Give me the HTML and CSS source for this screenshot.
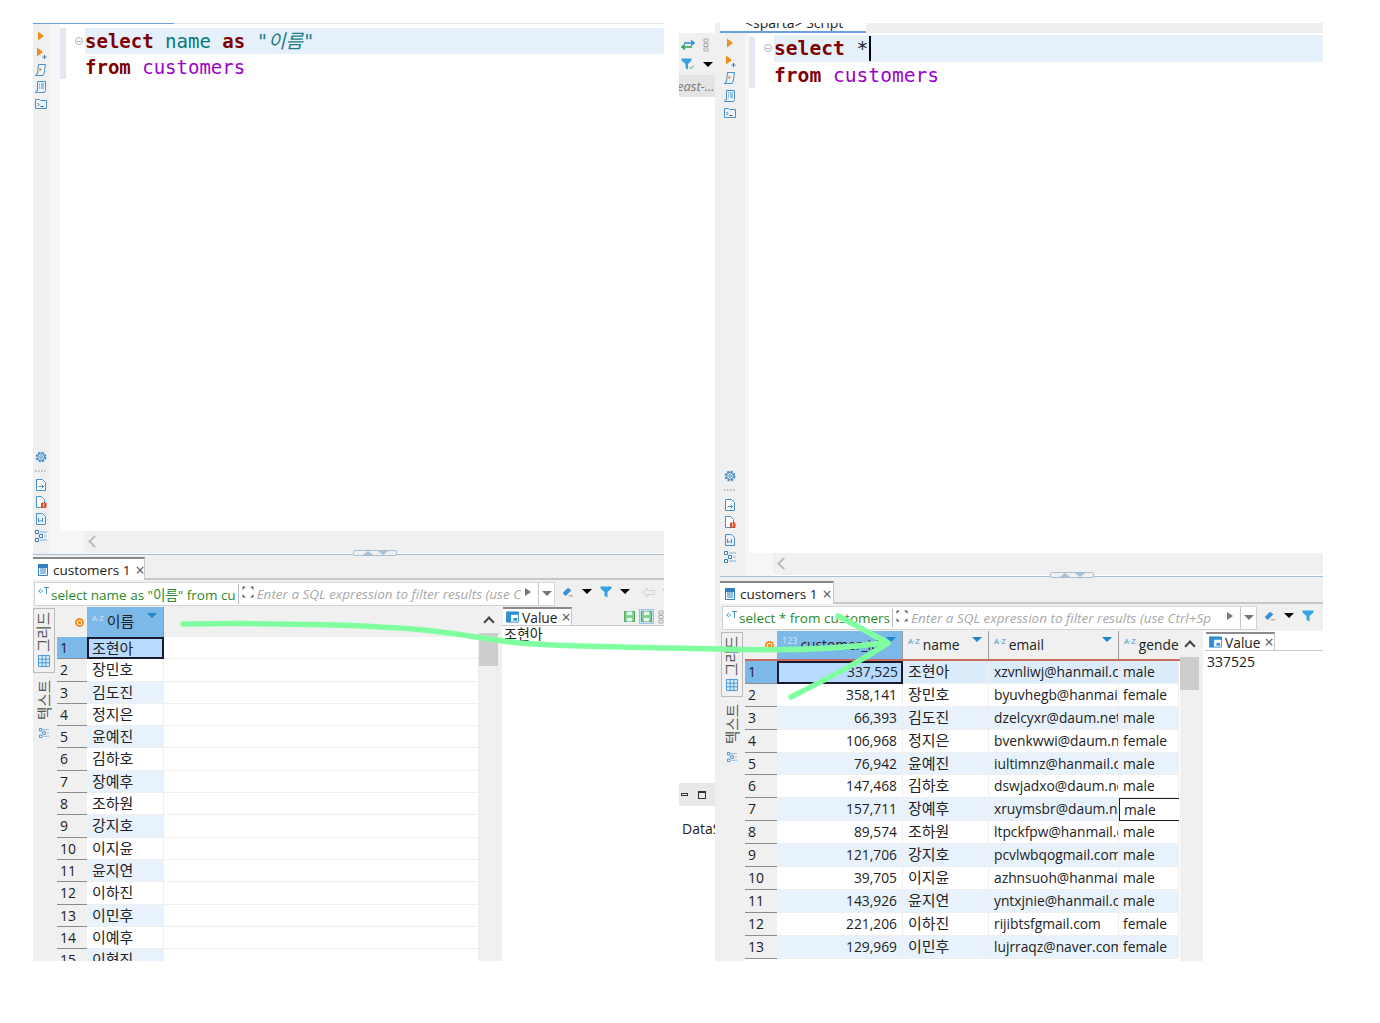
FILE: index.html
```html
<!DOCTYPE html>
<html lang="ko">
<head>
    <meta charset="UTF-8">
    <title>customers</title>
    <link rel="stylesheet" href="styles.css">
</head>
<body>
    <!-- 아이콘 모음 -->
    <svg class="icon-defs" xmlns="http://www.w3.org/2000/svg">
        <symbol id="i-run" viewBox="0 0 12 12"><path d="M3 1.500 9 6 3 10.500z" fill="#f08c1e"/></symbol>
        <symbol id="i-run-plus" viewBox="0 0 12 12"><path d="M2 .5 8 5 2 9.500z" fill="#f08c1e"/><path d="M9.500 8v4M7.500 10h4" stroke="#3a78b0" fill="none"/></symbol>
        <symbol id="i-script" viewBox="0 0 12 12"><path d="M3.500 .5h7L9 10h-.5L8 11.500H.5L1.500 10H2.500z" fill="#eaf3fb" stroke="#4a90c8"/><path d="M4.500 3.500l2.500 2-2.500 2z" fill="#f08c1e"/></symbol>
        <symbol id="i-list" viewBox="0 0 12 12"><path d="M2.500 .5h8v9l-1 2H.5l1-2h1z" fill="#eaf3fb" stroke="#4a90c8"/><path d="M4 3h1M6 3h3M4 5h1M6 5h3M4 7h1M6 7h3" stroke="#4a90c8"/></symbol>
        <symbol id="i-console" viewBox="0 0 12 12"><path d="M.5 10.500V1.500h4l1 1h6v8z" fill="#eaf3fb" stroke="#4a90c8"/><path d="M2.500 5l1.500 1.500L2.500 8M5.500 8.500h3" stroke="#35658f" fill="none"/></symbol>
        <symbol id="i-gear" viewBox="0 0 12 12"><circle cx="6" cy="6" r="4.200" fill="none" stroke="#4a90c8" stroke-width="2.400" stroke-dasharray="2.200 1.100"/><circle cx="6" cy="6" r="3.300" fill="#eaf3fb" stroke="#4a90c8"/><circle cx="6" cy="6" r="1.300" fill="none" stroke="#4a90c8"/></symbol>
        <symbol id="i-dots" viewBox="0 0 12 4"><path d="M0 2h12" stroke="#aaa" stroke-width="1.500" stroke-dasharray="1.500 1.500"/></symbol>
        <symbol id="i-doc-go" viewBox="0 0 12 12"><path d="M1.500 .5h6l3 3v8h-9z" fill="#fff" stroke="#4a90c8"/><path d="M3.500 7.500h5M6.500 5.500l2 2-2 2" stroke="#4a90c8" fill="none"/></symbol>
        <symbol id="i-doc-err" viewBox="0 0 12 12"><path d="M1.500 .5h5l3 3v8h-8z" fill="#fff" stroke="#4a90c8"/><rect x="6" y="6.500" width="5.500" height="5.500" rx="1" fill="#d9492e"/><path d="M8.700 7.500v2.200M8.700 10.300v.8" stroke="#fff"/></symbol>
        <symbol id="i-doc-x" viewBox="0 0 12 12"><path d="M1.500 .5h6l3 3v8h-9z" fill="#eaf3fb" stroke="#4a90c8"/><path d="M3.500 5v4l2-2 2 2V5" stroke="#4a90c8" fill="none"/></symbol>
        <symbol id="i-outline" viewBox="0 0 12 12"><path d="M.5 .5h3v3h-3zM4.500 4.500h3v3h-3zM.5 8.500h3v3h-3z" fill="#fff" stroke="#2f7fc1"/><path d="M5 2h7M9 6h3M5 10h7" stroke="#a9c6e0" stroke-width="1.500"/></symbol>
        <symbol id="i-table" viewBox="0 0 12 12"><path d="M.5 .5h11v11H.5z" fill="#d8ebfa" stroke="#4a9bd8"/><path d="M4.200 .5v11M7.800 .5v11M.5 4.200h11M.5 7.800h11" stroke="#4a9bd8"/></symbol>
        <symbol id="i-sheet" viewBox="0 0 12 12"><path d="M1.500 .5h9v11h-9z" fill="#fff" stroke="#2f7fc1"/><path d="M1.500 1h9v2.500h-9zM3 5h6M3 7h6M3 9h6" fill="#2f7fc1" stroke="#2f7fc1"/></symbol>
        <symbol id="i-sql" viewBox="0 0 12 10"><path d="M4 3 1.500 5 4 7" fill="none" stroke="#4a90c8"/><circle cx="5.200" cy="5" r=".8" fill="#4a90c8"/><path d="M7 1.500h5M9.500 1.500V8" stroke="#4a90c8" fill="none"/></symbol>
        <symbol id="i-expand" viewBox="0 0 12 12"><path d="M.5 .5h3.500l-3.500 3.500zM11.500 .5H8l3.500 3.500zM.5 11.500H4L.5 8zM11.500 11.500H8L11.500 8z" fill="#666"/></symbol>
        <symbol id="i-eraser" viewBox="0 0 14 12"><path d="M1 7 7 1l4 3-6 6H3z" fill="#3e8fd0"/><path d="M8 10.500h5" stroke="#888"/></symbol>
        <symbol id="i-funnel" viewBox="0 0 12 12"><path d="M.5 .5h11v2L7.500 6v5.500l-3-1.500V6L.5 2.500z" fill="#35a3e0"/></symbol>
        <symbol id="i-funnel-ok" viewBox="0 0 14 12"><path d="M.5 .5h10v2L7 6v5.500l-2.500-1.500V6L.5 2.500z" fill="#35a3e0"/><path d="M8.500 9l1.500 1.500 3-3" stroke="#3cb46e" fill="none"/></symbol>
        <symbol id="i-save" viewBox="0 0 12 12"><path d="M.5 .5h11v11H.5z" fill="#7dd08a" stroke="#45a05a"/><path d="M3 .5h6v4H3z" fill="#e6f6ea"/><path d="M3 7.500h6v4H3z" fill="#e6f6ea"/></symbol>
        <symbol id="i-value" viewBox="0 0 14 12"><path d="M.5 .5h13v11H.5z" fill="#fff" stroke="#2f8fd0"/><path d="M.5 .5h13v3H.5zM.5 .5h5v11h-5z" fill="#2f8fd0"/><path d="M8 7h4v3H8z" fill="#2f8fd0"/></symbol>
        <symbol id="i-swap" viewBox="0 0 14 10"><path d="M3 3h9M10 .5 13 3l-3 2.500" stroke="#2f8fd0" fill="none" stroke-width="1.500"/><path d="M11 7H2M4 4.500 1 7l3 2.500" stroke="#2da05a" fill="none" stroke-width="1.500"/></symbol>
        <symbol id="i-grip" viewBox="0 0 6 14"><path d="M1 1h4v3H1zM1 5.500h4v3H1zM1 10h4v3H1z" fill="none" stroke="#aaa"/></symbol>
    </svg>

    <!-- 왼쪽 캡처 -->
    <section class="win win-left">
        <div class="tabstrip"><div class="tabstrip-active tabstrip-active-left"></div></div>
        <div class="editor">
            <div class="tools">
                <div class="tools-group">
                    <svg class="ic"><use href="#i-run"/></svg>
                    <svg class="ic"><use href="#i-run-plus"/></svg>
                    <svg class="ic"><use href="#i-script"/></svg>
                    <svg class="ic"><use href="#i-list"/></svg>
                    <svg class="ic"><use href="#i-console"/></svg>
                </div>
                <div class="tools-group">
                    <svg class="ic"><use href="#i-gear"/></svg>
                    <svg class="ic ic-dots"><use href="#i-dots"/></svg>
                    <svg class="ic"><use href="#i-doc-go"/></svg>
                    <svg class="ic"><use href="#i-doc-err"/></svg>
                    <svg class="ic"><use href="#i-doc-x"/></svg>
                    <svg class="ic"><use href="#i-outline"/></svg>
                </div>
            </div>
            <div class="gutter"></div>
            <div class="code-wrap">
                <div class="annot"></div>
                <div class="code">
                    <div class="line line-on"><i class="fold"></i><b class="kw">select</b> <span class="col">name</span> <b class="kw">as</b> <em class="str">"이름"</em></div>
                    <div class="line"><b class="kw">from</b> <span class="tbl">customers</span></div>
                </div>
                <div class="hscroll"><span class="hscroll-arrow"></span></div>
            </div>
        </div>
        <div class="sash"><span class="sash-grip"><i class="up"></i><i class="down"></i></span></div>
        <div class="result-tabs">
            <div class="rtab"><svg class="ic-sm"><use href="#i-sheet"/></svg>customers 1<span class="close">×</span></div>
        </div>
        <div class="filter">
            <div class="filter-box">
                <svg class="ic-sql"><use href="#i-sql"/></svg>
                <span class="filter-sql">select name as "이름" from cu</span>
                <svg class="ic-expand"><use href="#i-expand"/></svg>
                <span class="filter-hint">Enter a SQL expression to filter results (use C</span>
                <i class="tri-right"></i>
                <span class="filter-drop"><i class="tri-down"></i></span>
            </div>
            <div class="filter-tools">
                <svg class="ic-tb"><use href="#i-eraser"/></svg><i class="tri-black"></i>
                <svg class="ic-tb"><use href="#i-funnel"/></svg><i class="tri-black"></i>
                <span class="back">⇦</span><i class="tri-gray"></i>
            </div>
        </div>
        <div class="results">
            <div class="strip">
                <div class="strip-box">
                    <span class="vert">그리드</span>
                    <svg class="ic-sm"><use href="#i-table"/></svg>
                </div>
                <span class="vert">텍스트</span>
                <svg class="ic-xs"><use href="#i-outline"/></svg>
            </div>
            <div class="sheet sheet-left">
                <div class="sheet-row sheet-head">
                    <div class="corner"><i class="corner-dot"></i></div>
                    <div class="th th-on"><span class="az">A·Z</span>이름<i class="th-sort"></i></div>
                    <div></div>
                </div>
                <div class="sheet-row row-first"><div class="rh rh-on">1</div><div class="td ko td-pick">조현아</div><div class="td"></div></div>
                <div class="sheet-row"><div class="rh">2</div><div class="td ko">장민호</div><div class="td"></div></div>
                <div class="sheet-row row-alt"><div class="rh">3</div><div class="td ko td-fill">김도진</div><div class="td"></div></div>
                <div class="sheet-row"><div class="rh">4</div><div class="td ko">정지은</div><div class="td"></div></div>
                <div class="sheet-row row-alt"><div class="rh">5</div><div class="td ko td-fill">윤예진</div><div class="td"></div></div>
                <div class="sheet-row"><div class="rh">6</div><div class="td ko">김하호</div><div class="td"></div></div>
                <div class="sheet-row row-alt"><div class="rh">7</div><div class="td ko td-fill">장예후</div><div class="td"></div></div>
                <div class="sheet-row"><div class="rh">8</div><div class="td ko">조하원</div><div class="td"></div></div>
                <div class="sheet-row row-alt"><div class="rh">9</div><div class="td ko td-fill">강지호</div><div class="td"></div></div>
                <div class="sheet-row"><div class="rh">10</div><div class="td ko">이지윤</div><div class="td"></div></div>
                <div class="sheet-row row-alt"><div class="rh">11</div><div class="td ko td-fill">윤지연</div><div class="td"></div></div>
                <div class="sheet-row"><div class="rh">12</div><div class="td ko">이하진</div><div class="td"></div></div>
                <div class="sheet-row row-alt"><div class="rh">13</div><div class="td ko td-fill">이민후</div><div class="td"></div></div>
                <div class="sheet-row"><div class="rh">14</div><div class="td ko">이예후</div><div class="td"></div></div>
                <div class="sheet-row row-alt"><div class="rh">15</div><div class="td ko td-fill">이현진</div><div class="td"></div></div>
            </div>
            <div class="vscroll"><i class="chev"></i><div class="vscroll-thumb"></div></div>
            <div class="value">
                <div class="value-head">
                    <div class="vtab"><svg class="ic-val"><use href="#i-value"/></svg>Value<span class="close">×</span></div>
                    <div class="value-tools">
                        <svg class="ic-save"><use href="#i-save"/></svg>
                        <span class="save-on"><svg class="ic-save"><use href="#i-save"/></svg></span>
                        <svg class="ic-grip"><use href="#i-grip"/></svg>
                    </div>
                </div>
                <div class="value-text value-ko">조현아</div>
            </div>
        </div>
    </section>

    <!-- 오른쪽 캡처 -->
    <section class="win win-right">
        <aside class="side">
            <div class="side-tools">
                <svg class="ic-swap"><use href="#i-swap"/></svg>
                <svg class="ic-grip"><use href="#i-grip"/></svg>
                <svg class="ic-ok"><use href="#i-funnel-ok"/></svg>
                <i class="tri-black"></i>
            </div>
            <div class="side-path">east-...</div>
            <div class="side-gap"></div>
            <div class="side-bar"><i class="min"></i><i class="max"></i></div>
            <div class="side-data">DataSource</div>
        </aside>
        <div class="main">
            <div class="tabstrip tabstrip-right"><div class="tabstrip-active tabstrip-active-right"><span class="script-name">&lt;sparta&gt; Script</span></div></div>
            <div class="editor editor-right">
                <div class="tools tools-right">
                    <div class="tools-group">
                        <svg class="ic"><use href="#i-run"/></svg>
                        <svg class="ic"><use href="#i-run-plus"/></svg>
                        <svg class="ic"><use href="#i-script"/></svg>
                        <svg class="ic"><use href="#i-list"/></svg>
                        <svg class="ic"><use href="#i-console"/></svg>
                    </div>
                    <div class="tools-group">
                        <svg class="ic"><use href="#i-gear"/></svg>
                        <svg class="ic ic-dots"><use href="#i-dots"/></svg>
                        <svg class="ic"><use href="#i-doc-go"/></svg>
                        <svg class="ic"><use href="#i-doc-err"/></svg>
                        <svg class="ic"><use href="#i-doc-x"/></svg>
                        <svg class="ic"><use href="#i-outline"/></svg>
                    </div>
                </div>
                <div class="gutter gutter-right"></div>
                <div class="code-wrap">
                    <div class="annot"></div>
                    <div class="code code-right">
                        <div class="line line-on"><i class="fold"></i><b class="kw">select</b> <span class="star">*</span><i class="caret"></i></div>
                        <div class="line"><b class="kw">from</b> <span class="tbl">customers</span></div>
                    </div>
                    <div class="hscroll"><span class="hscroll-arrow"></span></div>
                </div>
            </div>
            <div class="sash sash-right"><span class="sash-grip"><i class="up"></i><i class="down"></i></span></div>
            <div class="result-tabs result-tabs-right">
                <div class="rtab"><svg class="ic-sm"><use href="#i-sheet"/></svg>customers 1<span class="close">×</span></div>
            </div>
            <div class="filter filter-right">
                <div class="filter-box">
                    <svg class="ic-sql"><use href="#i-sql"/></svg>
                    <span class="filter-sql">select * from customers</span>
                    <svg class="ic-expand"><use href="#i-expand"/></svg>
                    <span class="filter-hint">Enter a SQL expression to filter results (use Ctrl+Sp</span>
                    <i class="tri-right"></i>
                    <span class="filter-drop"><i class="tri-down"></i></span>
                </div>
                <div class="filter-tools">
                    <svg class="ic-tb"><use href="#i-eraser"/></svg><i class="tri-black"></i>
                    <svg class="ic-tb"><use href="#i-funnel"/></svg>
                </div>
            </div>
            <div class="results">
                <div class="strip strip-right">
                    <div class="strip-box">
                        <span class="vert">그리드</span>
                        <svg class="ic-sm"><use href="#i-table"/></svg>
                    </div>
                    <span class="vert">텍스트</span>
                    <svg class="ic-xs"><use href="#i-outline"/></svg>
                </div>
                <div class="sheet sheet-right">
                    <div class="sheet-row sheet-head">
                        <div class="corner"><i class="corner-dot"></i></div>
                        <div class="th th-on"><span class="az az-num">123</span>customer_id<i class="th-sort"></i></div>
                        <div class="th"><span class="az">A·Z</span>name<i class="th-sort"></i></div>
                        <div class="th"><span class="az">A·Z</span>email<i class="th-sort"></i></div>
                        <div class="th th-last"><span class="az">A·Z</span>gende</div>
                    </div>
                    <div class="sheet-row row-first row-alt"><div class="rh rh-on">1</div><div class="td num td-pick">337,525</div><div class="td ko">조현아</div><div class="td">xzvnliwj@hanmail.com</div><div class="td">male</div></div>
                    <div class="sheet-row"><div class="rh">2</div><div class="td num">358,141</div><div class="td ko">장민호</div><div class="td">byuvhegb@hanmail.com</div><div class="td">female</div></div>
                    <div class="sheet-row row-alt"><div class="rh">3</div><div class="td num">66,393</div><div class="td ko">김도진</div><div class="td">dzelcyxr@daum.net</div><div class="td">male</div></div>
                    <div class="sheet-row"><div class="rh">4</div><div class="td num">106,968</div><div class="td ko">정지은</div><div class="td">bvenkwwi@daum.net</div><div class="td">female</div></div>
                    <div class="sheet-row row-alt"><div class="rh">5</div><div class="td num">76,942</div><div class="td ko">윤예진</div><div class="td">iultimnz@hanmail.com</div><div class="td">male</div></div>
                    <div class="sheet-row"><div class="rh">6</div><div class="td num">147,468</div><div class="td ko">김하호</div><div class="td">dswjadxo@daum.net</div><div class="td">male</div></div>
                    <div class="sheet-row row-alt"><div class="rh">7</div><div class="td num">157,711</div><div class="td ko">장예후</div><div class="td">xruymsbr@daum.net</div><div class="td td-box">male</div></div>
                    <div class="sheet-row"><div class="rh">8</div><div class="td num">89,574</div><div class="td ko">조하원</div><div class="td">ltpckfpw@hanmail.com</div><div class="td">male</div></div>
                    <div class="sheet-row row-alt"><div class="rh">9</div><div class="td num">121,706</div><div class="td ko">강지호</div><div class="td">pcvlwbqogmail.com</div><div class="td">male</div></div>
                    <div class="sheet-row"><div class="rh">10</div><div class="td num">39,705</div><div class="td ko">이지윤</div><div class="td">azhnsuoh@hanmail.net</div><div class="td">male</div></div>
                    <div class="sheet-row row-alt"><div class="rh">11</div><div class="td num">143,926</div><div class="td ko">윤지연</div><div class="td">yntxjnie@hanmail.com</div><div class="td">male</div></div>
                    <div class="sheet-row"><div class="rh">12</div><div class="td num">221,206</div><div class="td ko">이하진</div><div class="td">rijibtsfgmail.com</div><div class="td">female</div></div>
                    <div class="sheet-row row-alt"><div class="rh">13</div><div class="td num">129,969</div><div class="td ko">이민후</div><div class="td">lujrraqz@naver.com</div><div class="td">female</div></div>
                </div>
                <div class="vscroll"><i class="chev"></i><div class="vscroll-thumb"></div></div>
                <div class="value value-right">
                    <div class="value-head">
                        <div class="vtab"><svg class="ic-val"><use href="#i-value"/></svg>Value<span class="close">×</span></div>
                    </div>
                    <div class="value-text">337525</div>
                </div>
            </div>
        </div>
    </section>

    <!-- 초록 화살표 -->
    <svg class="arrow" viewBox="0 0 1380 1023" xmlns="http://www.w3.org/2000/svg">
        <path d="M183 624C260 623 340 624 400 628C450 631 480 639 520 643C580 648 660 647 720 649C780 651 830 650 885 643" />
        <path d="M838 616C855 625 872 634 888 643C860 662 825 680 791 697" />
    </svg>
</body>
</html>
```
FILE: styles.css
```css
* {
    box-sizing: border-box;
}

body {
    margin: 0;
    height: 1023px;
    position: relative;
    background-color: white;
    font-family: "Open Sans", "Noto Sans CJK KR", sans-serif;
    font-size: 14px;
    color: #222;
    overflow: hidden;
}

.icon-defs {
    position: absolute;
    width: 0;
    height: 0;
}

/* 캡처 두 장은 캔버스 위에 놓임 */
.win {
    position: absolute;
    top: 23px;
    height: 938px;
    overflow: hidden;
    display: flex;
}

.win-left {
    left: 33px;
    width: 631px;
    flex-direction: column;
}

.win-right {
    left: 679px;
    width: 644px;
}

/* 상단 탭 줄 */
.tabstrip {
    height: 1px;
    flex: none;
    background-color: #e4e4e4;
}

.tabstrip-active {
    height: 100%;
    background-color: #6a9fe8;
}

.tabstrip-active-left {
    width: 141px;
}

.tabstrip-right {
    height: 10px;
    background-color: #efefef;
}

.tabstrip-active-right {
    width: 146px;
    background-color: white;
    border-bottom: 2px solid #6a9fe8;
    overflow: hidden;
    position: relative;
}

.script-name {
    position: absolute;
    left: 25px;
    top: -9px;
    font-size: 14px;
    line-height: 18px;
}

/* 에디터 */
.editor {
    height: 530px;
    flex: none;
    display: flex;
    background-color: white;
}

.editor-right {
    height: 543px;
}

.tools {
    width: 17px;
    flex: none;
    background-color: #f0f0f0;
    display: flex;
    flex-direction: column;
    justify-content: space-between;
    padding: 6px 0 12px 2px;
}

.tools-right {
    width: 25px;
    padding: 4px 0 13px 4px;
}

.tools-group {
    display: flex;
    flex-direction: column;
    gap: 5px;
}

.tools-right .tools-group {
    gap: 5.500px;
}

.ic {
    width: 12px;
    height: 12px;
    display: block;
}

.ic-dots {
    height: 4px;
    width: 12px;
    margin: 1px 0;
}

.gutter {
    width: 10px;
    flex: none;
    background-color: #f6f6f6;
}

.gutter-right {
    width: 4px;
}

.code-wrap {
    flex: 1;
    position: relative;
    background: linear-gradient(#f6f6f6, #f6f6f6) left bottom / 24px 23px no-repeat, white;
    min-width: 0;
    display: flex;
}

.annot {
    width: 6px;
    height: 51px;
    margin-top: 4px;
    background-color: #e6e6f2;
    flex: none;
}

.code {
    flex: 1;
    padding: 4px 0 0 19px;
    font-family: "DejaVu Sans Mono", monospace;
    font-size: 19px;
    line-height: 26px;
}

.code-right {
    font-size: 19.600px;
    line-height: 27px;
    padding: 2px 0 0 19px;
}

.line {
    height: 26px;
    position: relative;
    white-space: pre;
}

.code-right .line {
    height: 27px;
}

.line-on {
    background-color: #e6f0fb;
}

.fold {
    position: absolute;
    left: -10px;
    top: 9px;
    width: 8px;
    height: 8px;
    border-radius: 50%;
    border: 1px solid #aab4bd;
    background: linear-gradient(#aab4bd, #aab4bd) center / 4px 1px no-repeat;
}

.kw {
    color: #7f0000;
}

.col {
    color: #007c80;
}

.str {
    color: #1f7d86;
    font-family: "DejaVu Sans Mono", "Noto Sans CJK KR", monospace;
}

.tbl {
    color: #9a00c8;
}

.star {
    color: #222;
}

.caret {
    display: inline-block;
    width: 1.500px;
    height: 25px;
    background-color: black;
    vertical-align: -6px;
    margin-left: 1px;
}

.hscroll {
    position: absolute;
    left: 24px;
    right: 0;
    bottom: 1px;
    height: 22px;
    background-color: #f0f0f0;
}

.hscroll-arrow {
    position: absolute;
    left: 6px;
    top: 6px;
    width: 9px;
    height: 9px;
    border-left: 2px solid #bbb;
    border-bottom: 2px solid #bbb;
    transform: rotate(45deg);
}

/* 분할선 */
.sash {
    height: 4px;
    flex: none;
    background-color: #f0f0f0;
    border-top: 1px solid #a9bfd6;
    position: relative;
}

.win-left .sash {
    height: 1px;
}

.sash-grip {
    position: absolute;
    left: 320px;
    top: -5px;
    width: 44px;
    height: 6px;
    border: 1px solid #a9bfd6;
    border-radius: 2px;
    background-color: #f0f0f0;
    display: flex;
    justify-content: center;
    align-items: center;
    gap: 5px;
}

.sash-right .sash-grip {
    left: 330px;
}

.up, .down {
    width: 0;
    height: 0;
    border-left: 5px solid transparent;
    border-right: 5px solid transparent;
}

.up {
    border-bottom: 4px solid #a9bfd6;
}

.down {
    border-top: 4px solid #a9bfd6;
}

/* 결과 탭 */
.result-tabs {
    height: 25px;
    flex: none;
    background-color: #f0f0f0;
    border-bottom: 2px solid #c8c8c8;
    padding-top: 2px;
}

.result-tabs-right {
    height: 24px;
    padding-top: 1px;
}

.rtab {
    width: 112px;
    height: 23px;
    background-color: white;
    border-top: 2px solid #8a8a8a;
    border-right: 1px solid #c8c8c8;
    display: flex;
    align-items: center;
    gap: 4px;
    padding-left: 4px;
    font-size: 13.500px;
    white-space: nowrap;
}

.result-tabs-right .rtab {
    width: 114px;
}

.close {
    color: #555;
    font-size: 16px;
    margin-left: 1px;
    line-height: 1;
}

.ic-sm {
    width: 12px;
    height: 12px;
    display: block;
    flex: none;
}

.ic-xs {
    width: 10px;
    height: 12px;
    display: block;
    margin-left: 6px;
}

/* 필터 줄 */
.filter {
    height: 27px;
    flex: none;
    display: flex;
    align-items: center;
    background-color: #f0f0f0;
    padding-left: 1px;
}

.filter-right {
    padding-left: 2px;
}

.filter-box {
    width: 521px;
    height: 24px;
    flex: none;
    background-color: white;
    border: 1px solid #d4d4d4;
    display: flex;
    align-items: center;
    padding-left: 2px;
    white-space: nowrap;
    overflow: hidden;
}

.filter-right .filter-box {
    width: 535px;
}

.ic-sql {
    width: 12px;
    height: 10px;
    flex: none;
    margin-bottom: 5px;
}

.filter-sql {
    color: #2a8a2a;
    font-size: 13.500px;
    margin-left: 2px;
    padding-right: 2px;
    border-right: 1px solid #bbb;
}

.ic-expand {
    width: 12px;
    height: 12px;
    flex: none;
    margin: 0 3px 4px 3px;
}

.filter-hint {
    color: #a8a8a8;
    font-style: italic;
    font-size: 13.500px;
    flex: 1;
    overflow: hidden;
    min-width: 0;
}

.tri-right {
    width: 0;
    height: 0;
    border-top: 4px solid transparent;
    border-bottom: 4px solid transparent;
    border-left: 6px solid #777;
    margin: 0 7px 4px 4px;
    flex: none;
}

.filter-drop {
    width: 16px;
    height: 100%;
    flex: none;
    border-left: 1px solid #c8c8c8;
    display: flex;
    align-items: center;
    justify-content: center;
}

.tri-down, .tri-gray, .tri-black {
    display: block;
    width: 0;
    height: 0;
    border-left: 5px solid transparent;
    border-right: 5px solid transparent;
    flex: none;
}

.tri-down, .tri-gray {
    border-top: 5px solid #777;
}

.tri-black {
    border-top: 5px solid black;
}

.filter-tools {
    display: flex;
    align-items: center;
    gap: 8px;
    padding: 0 0 4px 7px;
    white-space: nowrap;
}

.ic-tb {
    width: 12px;
    height: 12px;
    display: block;
    flex: none;
}

.back {
    color: #bbb;
    font-size: 13px;
    line-height: 12px;
    margin-left: 4px;
}

/* 결과 영역 */
.results {
    flex: 1;
    min-height: 0;
    display: flex;
    overflow: hidden;
}

.strip {
    width: 24px;
    flex: none;
    background-color: #f0f0f0;
    padding-top: 1px;
    display: flex;
    flex-direction: column;
    gap: 7px;
    align-items: flex-start;
}

.strip-right {
    width: 25px;
    padding-left: 1px;
}

.strip-box {
    width: 22px;
    height: 65px;
    border: 1px solid #bbb;
    display: flex;
    flex-direction: column;
    align-items: center;
    gap: 3px;
    padding-top: 3px;
}

.vert {
    writing-mode: vertical-rl;
    text-orientation: sideways;
    transform: rotate(180deg);
    font-size: 14.500px;
    line-height: 20px;
    color: #555;
    width: 20px;
    display: block;
}

.strip > .vert {
    margin-left: 2px;
}

.sheet {
    flex: none;
    overflow: hidden;
}

.sheet-left {
    width: 422px;
}

.sheet-right {
    width: 435px;
}

.sheet-row {
    display: grid;
    height: 22.300px;
    align-items: stretch;
}

.sheet-left .sheet-row {
    grid-template-columns: 30px 77px 1fr;
}

.sheet-right .sheet-row {
    height: 22.900px;
    grid-template-columns: 32px 126px 86px 130px 60px;
}

.sheet-row.sheet-head {
    height: 30px;
    background-color: #f0f0f0;
}

.sheet-right .sheet-row.sheet-head {
    border-bottom: 2px solid #c46a60;
}

.corner {
    display: flex;
    align-items: center;
    justify-content: flex-end;
    padding-right: 3px;
}

.corner-dot {
    width: 9px;
    height: 9px;
    border-radius: 50%;
    border: 2px solid #f09020;
    background: radial-gradient(#f09020 40%, white 45%);
}

.th {
    position: relative;
    padding: 4px 0 0 5px;
    border-right: 1px solid #999;
    font-size: 13.800px;
    white-space: nowrap;
    overflow: hidden;
    line-height: 20px;
}

.th-last {
    border-right: none;
}

.th-on {
    background-color: #7cb8e8;
}

.sheet-left .th {
    font-size: 15px;
}

.az {
    font-size: 8px;
    color: #4a90c8;
    position: relative;
    top: -6px;
    margin-right: 3px;
    line-height: 8px;
}

.az-num {
    font-size: 9px;
}

.th-on .az {
    color: #d6e9f8;
}

.th-sort {
    position: absolute;
    right: 6px;
    top: 6px;
    width: 0;
    height: 0;
    border-left: 5px solid transparent;
    border-right: 5px solid transparent;
    border-top: 5px solid #1c86c8;
}

.rh {
    background-color: #f0f0f0;
    border-bottom: 1px solid #8c8c8c;
    padding: 1px 0 0 3px;
    font-size: 14px;
    line-height: 20px;
}

.rh-on {
    background-color: #7cb8e8;
}

.td {
    padding: 0 5px;
    font-size: 13.800px;
    line-height: 21px;
    border-bottom: 1px solid #efefef;
    border-right: 1px solid #eee;
    white-space: nowrap;
    overflow: hidden;
    min-width: 0;
}

.sheet-right .td:last-child {
    padding-left: 4px;
}

.ko {
    font-size: 15px;
    line-height: 20px;
}

.num {
    text-align: right;
}

.td-fill, .row-alt .td {
    background-color: #e8f2fc;
}

.sheet-left .row-alt .td:last-child {
    background-color: white;
}

.row-first .td {
    background-color: #dcecfb;
}

.sheet-left .row-first .td:last-child {
    background-color: white;
}

.td.td-pick {
    background-color: #b8dafe;
    border: 2px solid #1a1a2a;
    padding-left: 3px;
    padding-right: 3px;
    line-height: 18px;
}

.td.td-box {
    background-color: white;
    border: 1px solid #1a1a2a;
    border-right: none;
}

.vscroll {
    width: 23px;
    flex: none;
    background-color: #f0f0f0;
}

.chev {
    display: block;
    width: 8px;
    height: 8px;
    border-left: 2px solid #444;
    border-top: 2px solid #444;
    transform: rotate(45deg);
    margin: 11px 0 7px 6px;
}

.vscroll-thumb {
    width: 19px;
    height: 33px;
    background-color: #cdcdcd;
}

.value {
    flex: 1;
    min-width: 0;
    background: white;
}

.value-right {
    margin-left: 2px;
}

.value-head {
    height: 19px;
    display: flex;
    background-color: #f0f0f0;
    border-bottom: 1px solid #c8c8c8;
    justify-content: space-between;
    align-items: flex-end;
}

.value-right .value-head {
    height: 20px;
    background-color: white;
}

.vtab {
    height: 18px;
    width: 69px;
    background-color: white;
    margin-left: 1px;
    border-top: 2px solid #8a8a8a;
    border-right: 1px solid #c8c8c8;
    display: flex;
    align-items: center;
    gap: 3px;
    padding-left: 3px;
    font-size: 13.800px;
    white-space: nowrap;
}

.ic-val {
    width: 13px;
    height: 12px;
    flex: none;
}

.value-tools {
    display: flex;
    align-items: center;
    gap: 4px;
    padding-bottom: 1px;
}

.ic-save {
    width: 11px;
    height: 11px;
    display: block;
}

.save-on {
    background-color: #c8e0f4;
    border: 1px solid #9cc4e6;
    padding: 1px;
}

.ic-grip {
    width: 6px;
    height: 14px;
    flex: none;
}

.value-text {
    padding: 1px 0 0 2px;
    font-size: 14px;
    line-height: 20px;
}

.value-ko {
    padding-top: 0;
    line-height: 16px;
}

/* 왼쪽 사이드 조각 */
.side {
    width: 36px;
    flex: none;
    display: flex;
    flex-direction: column;
    overflow: hidden;
    background-color: white;
}

.side-tools {
    height: 42px;
    margin-top: 10px;
    flex: none;
    background-color: #f0f0f0;
    display: grid;
    grid-template-columns: 22px 10px;
    align-items: center;
    justify-items: start;
    padding: 2px 0 2px 2px;
}

.ic-swap {
    width: 14px;
    height: 10px;
}

.ic-ok {
    width: 14px;
    height: 12px;
}

.side-path {
    height: 22px;
    flex: none;
    background-color: #e4e4e4;
    color: #777;
    font-style: italic;
    font-size: 13px;
    line-height: 22px;
    text-indent: -2px;
    white-space: nowrap;
    overflow: hidden;
}

.side-gap {
    height: 686px;
    flex: none;
}

.side-bar {
    height: 23px;
    flex: none;
    background-color: #e8e8e8;
    display: flex;
    align-items: center;
    gap: 10px;
    padding-left: 2px;
}

.min {
    width: 7px;
    height: 3px;
    border: 1px solid #333;
}

.max {
    width: 8px;
    height: 8px;
    border: 1px solid #333;
    border-top-width: 2px;
}

.side-data {
    padding: 13px 0 0 3px;
    white-space: nowrap;
    font-size: 14px;
}

.main {
    flex: 1;
    min-width: 0;
    display: flex;
    flex-direction: column;
    padding-left: 5px;
    background: linear-gradient(#f0f0f0, #f0f0f0) left / 5px 100% no-repeat;
}

/* 초록 화살표는 다른 것 위에 얹힘 */
.arrow {
    position: absolute;
    left: 0;
    top: 0;
    width: 1380px;
    height: 1023px;
    pointer-events: none;
    fill: none;
    stroke: #80ffa0;
    stroke-width: 5.500;
    stroke-linecap: round;
    stroke-linejoin: round;
}
```
